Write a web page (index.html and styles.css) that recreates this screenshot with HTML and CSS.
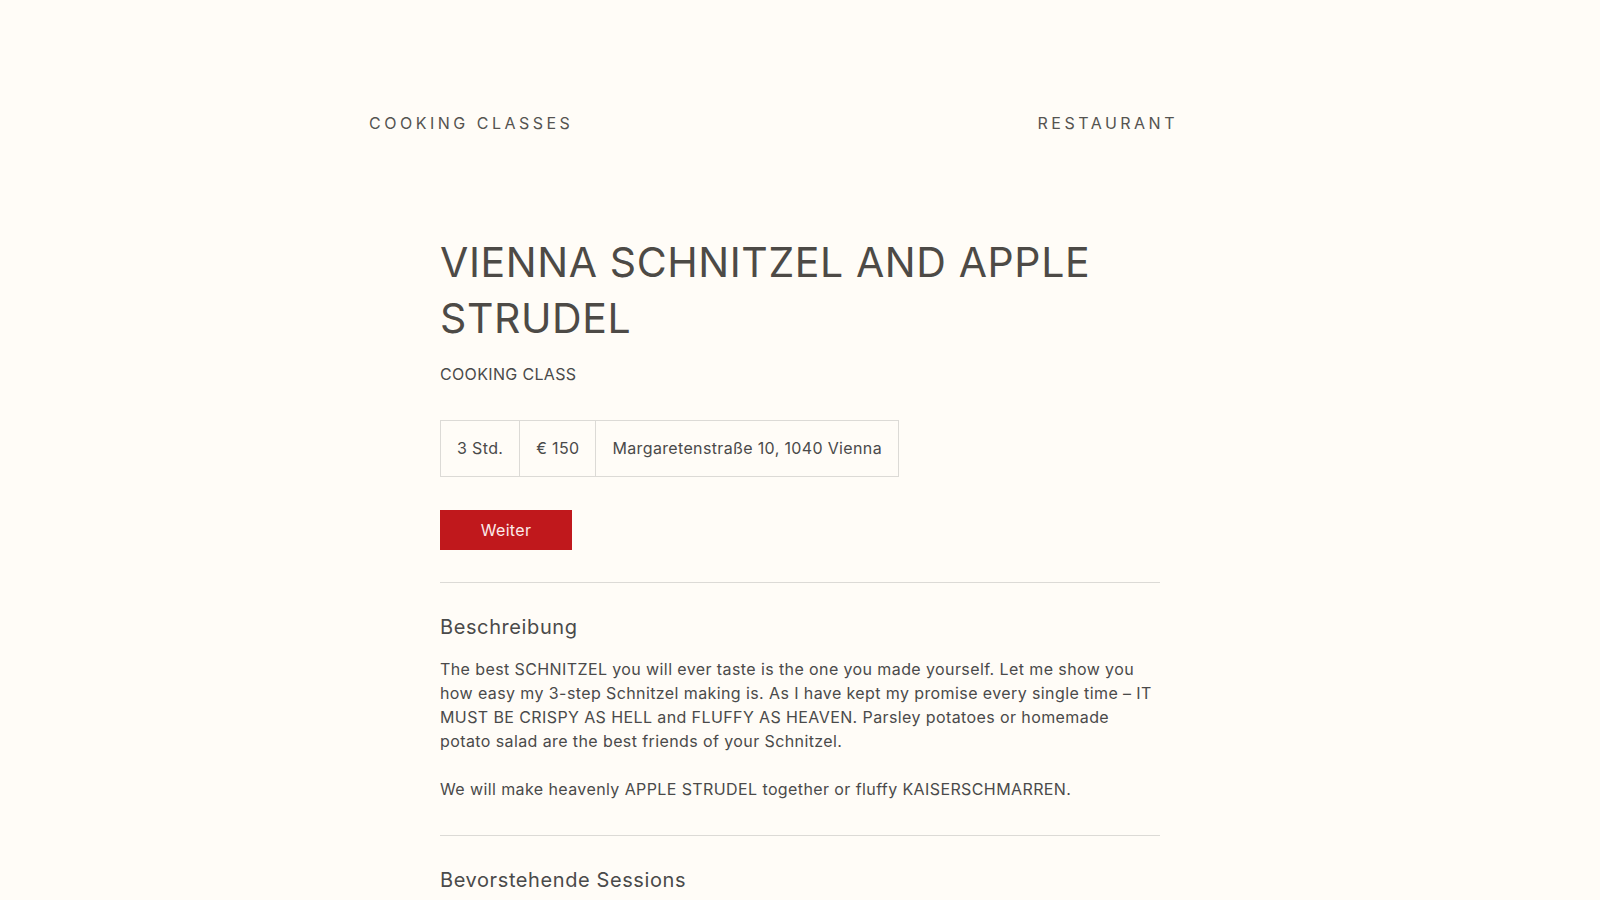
FILE: index.html
```html
<!DOCTYPE html>
<html lang="de">
<head>
<meta charset="utf-8">
<title>Vienna Schnitzel and Apple Strudel</title>
<link rel="stylesheet" href="styles.css">
</head>
<body>
<header class="site-header">
  <nav class="nav">
    <a class="nav-link" href="#">COOKING CLASSES</a>
    <a class="nav-link" href="#">RESTAURANT</a>
  </nav>
</header>
<main class="content">
  <h1 class="title">VIENNA SCHNITZEL AND APPLE STRUDEL</h1>
  <p class="subtitle">COOKING CLASS</p>
  <div class="facts">
    <div class="fact">3 Std.</div>
    <div class="fact">€ 150</div>
    <div class="fact">Margaretenstraße 10, 1040 Vienna</div>
  </div>
  <div class="actions">
    <button class="btn" type="button">Weiter</button>
  </div>
  <hr class="divider">
  <section class="section">
    <h2 class="section-title">Beschreibung</h2>
    <div class="description">
      <p>The best SCHNITZEL you will ever taste is the one you made yourself. Let me show you how easy my 3-step Schnitzel making is. As I have kept my promise every single time – IT MUST BE CRISPY AS HELL and FLUFFY AS HEAVEN. Parsley potatoes or homemade potato salad are the best friends of your Schnitzel.</p>
      <p>We will make heavenly APPLE STRUDEL together or fluffy KAISERSCHMARREN.</p>
    </div>
  </section>
  <hr class="divider divider-low">
  <section class="section">
    <h2 class="section-title">Bevorstehende Sessions</h2>
  </section>
</main>
</body>
</html>
```
FILE: styles.css
```css
html, body {
  margin: 0;
  padding: 0;
}

body {
  background: #fffcf7;
  color: #4a4a4a;
  font-family: Inter, "Open Sans", sans-serif;
  font-size: 16px;
  line-height: 24px;
  letter-spacing: 0.4px;
  overflow: hidden;
}

.site-header {
  padding-top: 111px;
}

.nav {
  display: flex;
  justify-content: space-between;
  padding: 0 422px 0 369px;
}

.nav-link {
  color: #555350;
  text-decoration: none;
  font-size: 16px;
  line-height: 24px;
  letter-spacing: 3.5px;
}

.content {
  width: 720px;
  margin: 0 auto;
  padding-top: 99px;
}

.title {
  margin: 0;
  font-size: 41px;
  line-height: 56px;
  font-weight: 400;
  letter-spacing: 0.6px;
  color: #4d4a46;
}

.subtitle {
  margin: 16px 0 0;
  font-size: 16px;
  line-height: 24px;
  letter-spacing: 0.34px;
  color: #4a4a4a;
}

.facts {
  display: inline-flex;
  margin-top: 34px;
  border: 1px solid #dcdad6;
  letter-spacing: 0.35px;
}

.fact {
  padding: 0 16px;
  line-height: 55px;
  white-space: nowrap;
}

.fact + .fact {
  border-left: 1px solid #dcdad6;
}

.actions {
  margin-top: 33px;
}

.btn {
  display: block;
  width: 132px;
  height: 40px;
  padding: 0;
  border: 0;
  border-radius: 0;
  background: #c0181c;
  color: #fbeaea;
  font-family: inherit;
  font-size: 16px;
  letter-spacing: 0.34px;
}

.divider {
  margin: 32px 0 0;
  border: 0;
  border-top: 1px solid #dcdad6;
  height: 0;
}

.divider-low {
  margin-top: 34px;
}

.section-title {
  margin: 30px 0 0;
  font-size: 20px;
  line-height: 28px;
  font-weight: 400;
  letter-spacing: 0.6px;
  color: #4a4a4a;
}

.description {
  margin-top: 16px;
}

.description p {
  margin: 0;
}

.description p + p {
  margin-top: 24px;
}
```
